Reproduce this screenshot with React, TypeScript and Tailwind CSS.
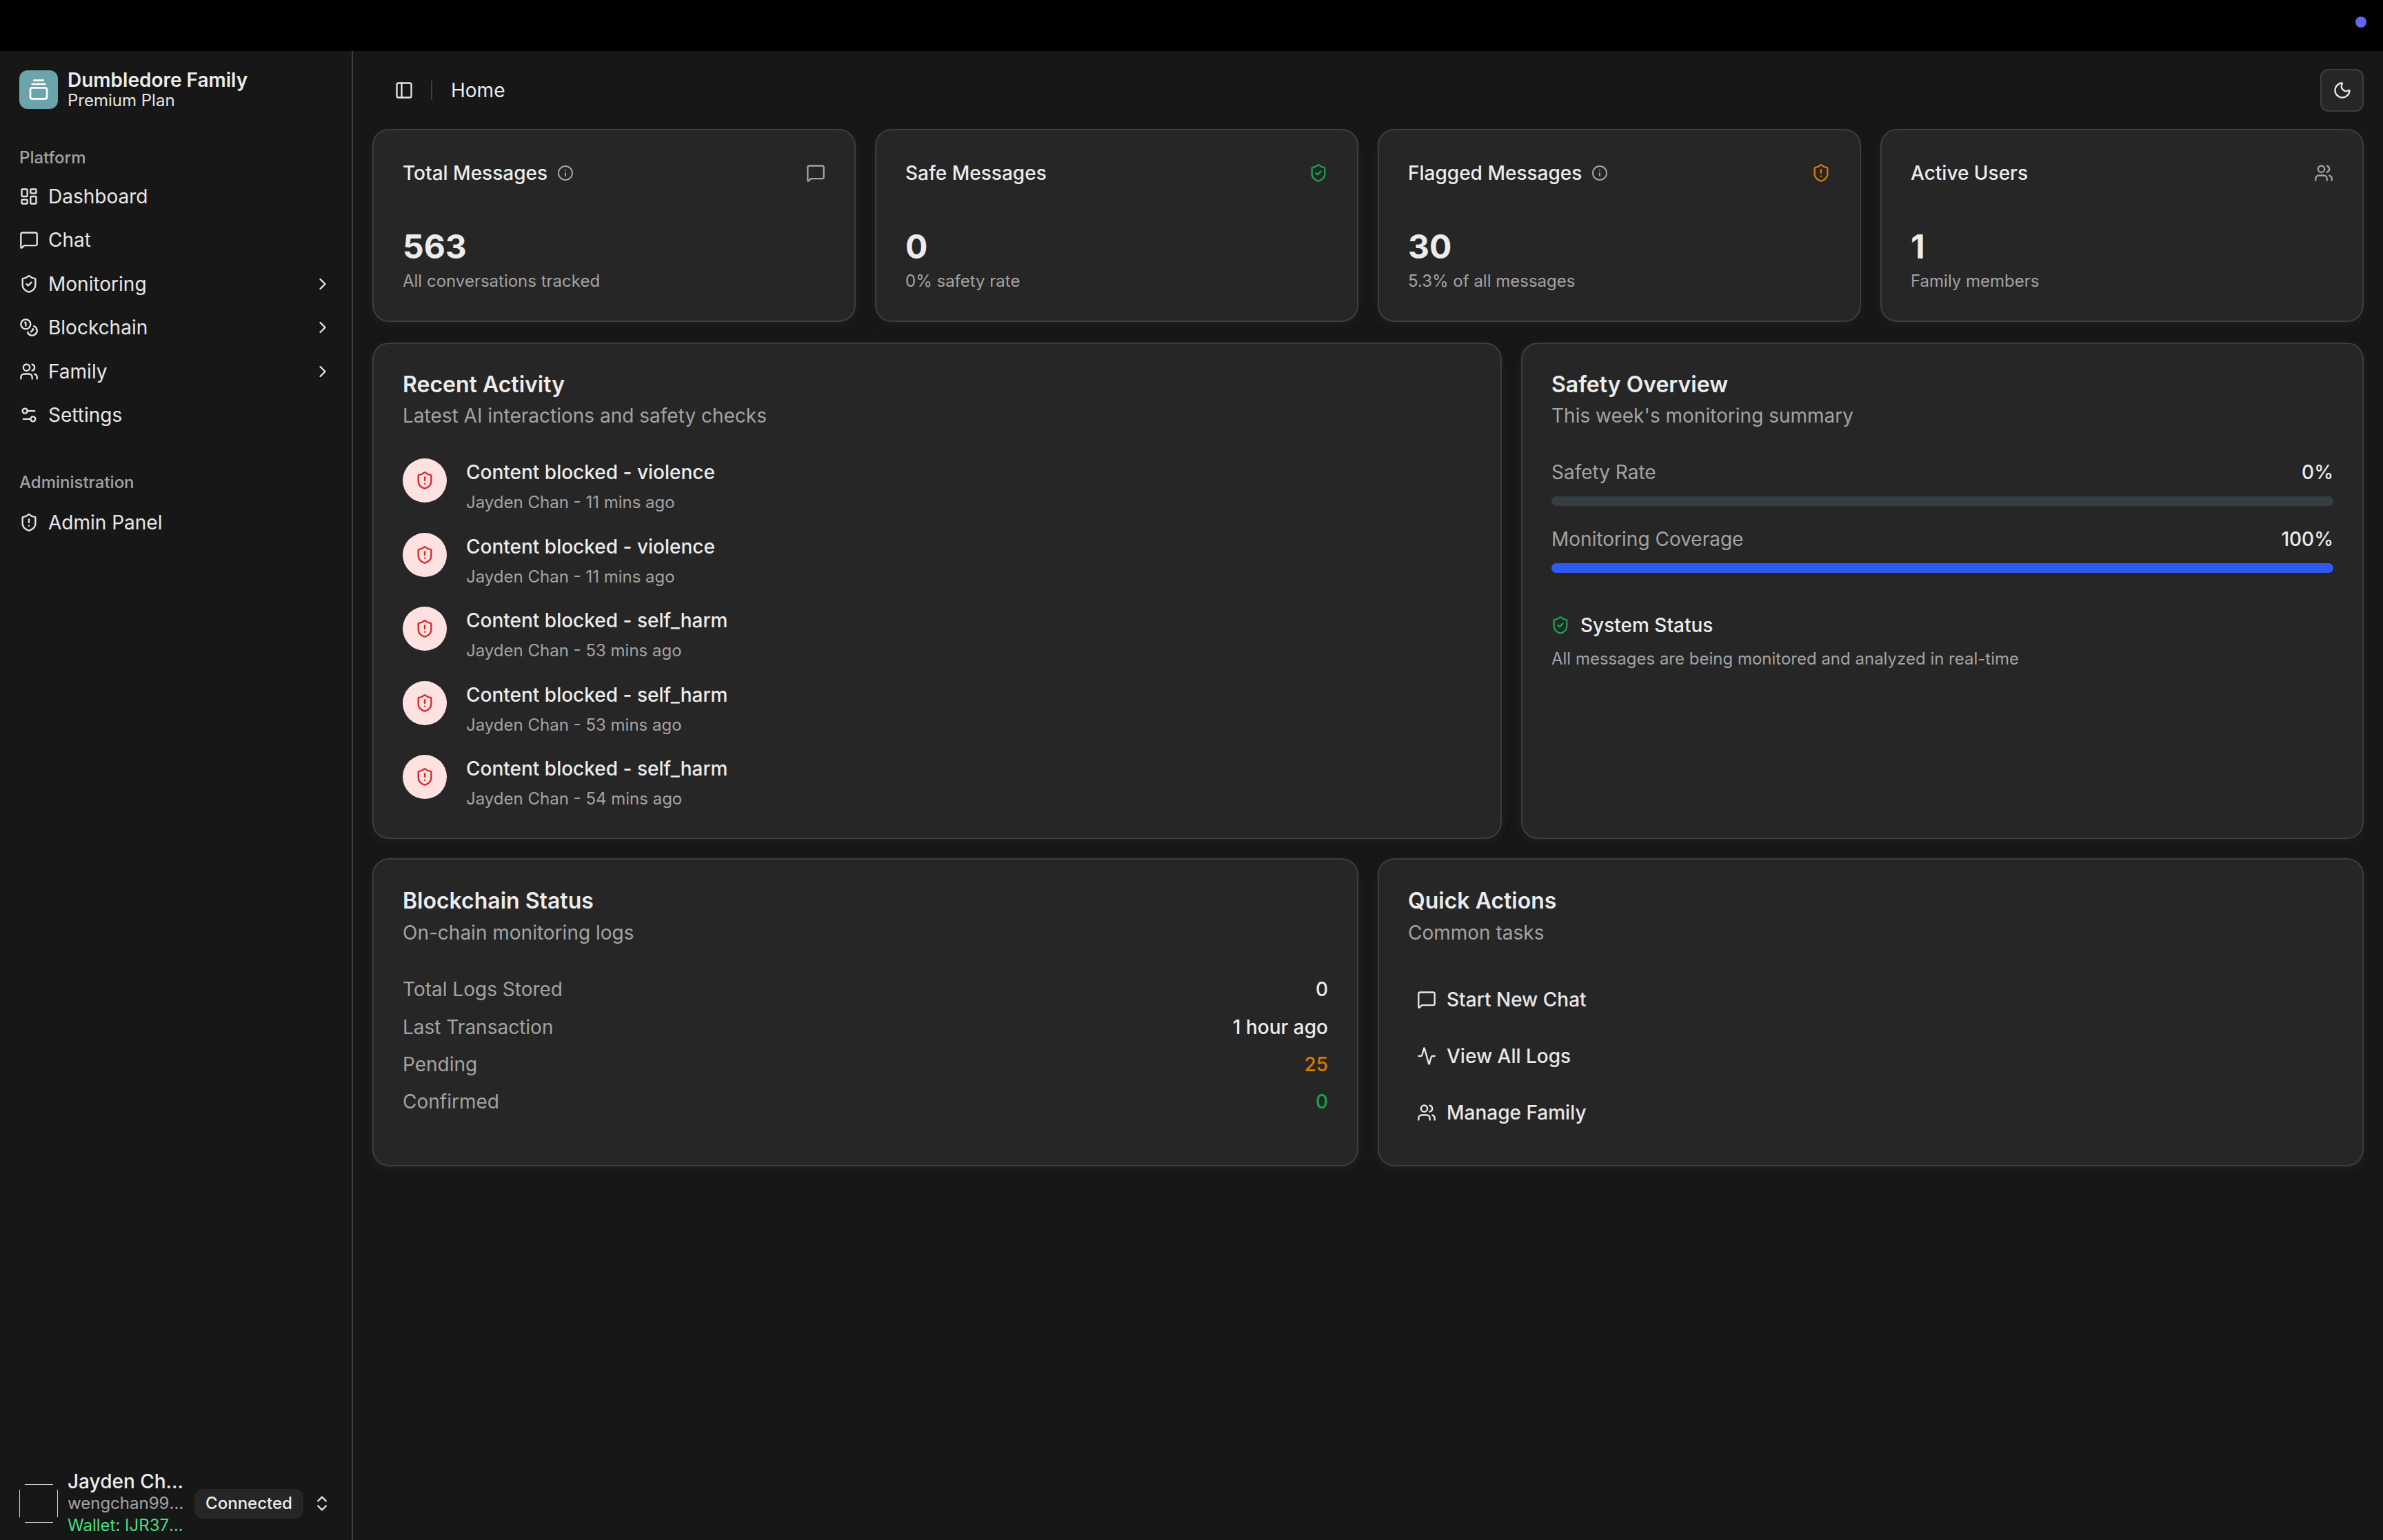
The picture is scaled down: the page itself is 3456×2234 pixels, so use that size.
import React from "react";
import {
  Activity, ChevronRight, ChevronsUpDown, Coins, GalleryVerticalEnd, Info, LayoutDashboard,
  MessageSquare, Moon, PanelLeft, Settings2, ShieldAlert, ShieldCheck, Users,
} from "lucide-react";

const cardClass =
  "rounded-[24px] border-2 border-[#3d3d3d] bg-[#262626] shadow-[0_4px_12px_rgba(28,44,52,0.45)]";

function NavItem({ icon: Icon, label, chevron }: { icon: any; label: string; chevron?: boolean }) {
  return (
    <div className="flex h-[63.5px] items-center">
      <Icon size={28} strokeWidth={2} className="shrink-0 text-[#e5e5e5]" />
      <span className="ml-[14px] flex-1 text-[28px] leading-[40px] text-[#e8e8e8]">{label}</span>
      {chevron && <ChevronRight size={28} className="text-[#e5e5e5]" />}
    </div>
  );
}

function StatCard({ title, value, sub, icon: Icon, iconClass, info }: any) {
  return (
    <div className={`${cardClass} h-[280px] px-[42px] pt-[42px]`}>
      <div className="flex h-[40px] items-center justify-between">
        <div className="flex items-center gap-[14px]">
          <span className="text-[28px] font-medium leading-[40px] text-[#ececec]">{title}</span>
          {info && <Info size={24} className="text-[#a3a3a3]" />}
        </div>
        <Icon size={28} className={iconClass} />
      </div>
      <div className="mt-[55px] text-[48px] font-bold leading-[64px] text-[#ececec]">{value}</div>
      <div className="mt-[2px] text-[24px] leading-[32px] text-[#a3a3a3]">{sub}</div>
    </div>
  );
}

function CardHead({ title, sub, tight }: { title: string; sub: string; tight?: boolean }) {
  return (
    <>
      <div className="text-[32px] font-semibold leading-[40px] text-[#ececec]">{title}</div>
      <div className={`${tight ? "mt-[5px]" : "mt-[6px]"} text-[28px] leading-[40px] text-[#a3a3a3]`}>{sub}</div>
    </>
  );
}

function ActivityRow({ title, sub }: { title: string; sub: string }) {
  return (
    <div className="flex h-[107.5px] items-start">
      <div className="flex h-[64px] w-[64px] shrink-0 items-center justify-center rounded-full bg-[#fee2e2]">
        <ShieldAlert size={28} className="text-[#dc2626]" />
      </div>
      <div className="ml-[28px]">
        <div className="text-[28px] font-medium leading-[40px] text-[#ececec]">{title}</div>
        <div className="mt-[4px] text-[24px] leading-[40px] text-[#a3a3a3]">{sub}</div>
      </div>
    </div>
  );
}

function Progress({ label, value, fill }: { label: string; value: string; fill: string }) {
  return (
    <div>
      <div className="flex h-[40px] items-center justify-between text-[28px]">
        <span className="text-[#a3a3a3]">{label}</span>
        <span className="font-medium text-[#ececec]">{value}</span>
      </div>
      <div className={`mt-[15px] h-[14px] rounded-full ${fill}`} />
    </div>
  );
}

function StatRow({ label, value, cls }: { label: string; value: string; cls: string }) {
  return (
    <div className="flex h-[54.4px] items-center justify-between text-[28px]">
      <span className="text-[#a3a3a3]">{label}</span>
      <span className={`font-medium ${cls}`}>{value}</span>
    </div>
  );
}

function QuickAction({ icon: Icon, label }: { icon: any; label: string }) {
  return (
    <div className="flex h-[82px] items-center pl-[13px]">
      <Icon size={28} className="text-[#e8e8e8]" />
      <span className="ml-[15px] text-[28px] font-medium leading-[40px] text-[#e8e8e8]">{label}</span>
    </div>
  );
}

export default function App() {
  return (
    <div className="relative flex h-screen flex-col bg-black font-['Inter',sans-serif]">
      <div className="relative h-[74px] shrink-0 bg-black">
        <div className="absolute right-[24px] top-[24px] h-[16px] w-[16px] rounded-full bg-[#6366f1]" />
      </div>
      <div className="flex min-h-0 flex-1 bg-[#171717]">
        <aside className="flex w-[512px] shrink-0 flex-col border-r-2 border-[#3d3d3d] bg-[#171717] px-[28px] pt-[28px]">
          <div className="flex h-[56px] items-center">
            <div className="flex h-[56px] w-[56px] items-center justify-center rounded-[12px] bg-[#6ba4aa]">
              <GalleryVerticalEnd size={32} className="text-white" />
            </div>
            <div className="mb-[1px] ml-[14px]">
              <div className="text-[28px] font-semibold leading-[32px] text-[#ececec]">Dumbledore Family</div>
              <div className="text-[24px] leading-[28px] text-[#e5e5e5]">Premium Plan</div>
            </div>
          </div>
          <div className="mt-[55px] text-[24px] font-medium leading-[32px] text-[#a3a3a3]">Platform</div>
          <div className="mt-[8px]">
            <NavItem icon={LayoutDashboard} label="Dashboard" />
            <NavItem icon={MessageSquare} label="Chat" />
            <NavItem icon={ShieldCheck} label="Monitoring" chevron />
            <NavItem icon={Coins} label="Blockchain" chevron />
            <NavItem icon={Users} label="Family" chevron />
            <NavItem icon={Settings2} label="Settings" />
          </div>
          <div className="mt-[50px] text-[24px] font-medium leading-[32px] text-[#a3a3a3]">Administration</div>
          <div className="mt-[10px]">
            <NavItem icon={ShieldAlert} label="Admin Panel" />
          </div>
          <div className="mt-auto flex items-center pb-[5px]">
            <svg width="56" height="56" viewBox="0 0 56 56" className="shrink-0" fill="none" stroke="#cfcfcf" strokeWidth="1">
              <path d="M8 0.5H49M8 55.5H49M0.5 8V48M55.5 8V48" />
            </svg>
            <div className="ml-[14px] w-[172px] min-w-0">
              <div className="truncate text-[28px] font-medium leading-[32px] text-[#ececec]">Jayden Chan</div>
              <div className="truncate text-[24px] leading-[32px] text-[#a3a3a3]">wengchan99@gmail.com</div>
              <div className="truncate text-[24px] leading-[32px] text-[#4ade80]">Wallet: IJR37xkq91</div>
            </div>
            <div className="ml-[12px] flex h-[43px] w-[158px] shrink-0 items-center justify-center rounded-[12px] bg-[#262626] text-[24px] font-medium text-[#ececec]">
              Connected
            </div>
            <ChevronsUpDown size={28} className="ml-[13px] shrink-0 text-[#e5e5e5]" />
          </div>
        </aside>

        <main className="min-w-0 flex-1 px-[28px]">
          <header className="flex h-[113px] items-center justify-between">
            <div className="flex items-center">
              <PanelLeft size={28} className="ml-[32px] text-[#e5e5e5]" />
              <div className="ml-[25px] h-[28px] w-[2px] bg-[#3d3d3d]" />
              <span className="ml-[27px] text-[28px] leading-[40px] text-[#ececec]">Home</span>
            </div>
            <div className="flex h-[62px] w-[63px] items-center justify-center rounded-[12px] border-2 border-[#3d3d3d] bg-[#262626]">
              <Moon size={28} className="text-[#e5e5e5]" />
            </div>
          </header>

          <div className="grid grid-cols-4 gap-[28px]">
            <StatCard title="Total Messages" value="563" sub="All conversations tracked" icon={MessageSquare} iconClass="text-[#a3a3a3]" info />
            <StatCard title="Safe Messages" value="0" sub="0% safety rate" icon={ShieldCheck} iconClass="text-[#16a34a]" />
            <StatCard title="Flagged Messages" value="30" sub="5.3% of all messages" icon={ShieldAlert} iconClass="text-[#d97706]" info />
            <StatCard title="Active Users" value="1" sub="Family members" icon={Users} iconClass="text-[#a3a3a3]" />
          </div>

          <div className="mt-[30px] grid grid-cols-[1638fr_1222fr] gap-[28px]">
            <div className={`${cardClass} h-[720px] px-[42px] pt-[39px]`}>
              <CardHead title="Recent Activity" sub="Latest AI interactions and safety checks" tight />
              <div className="mt-[42px]">
                <ActivityRow title="Content blocked - violence" sub="Jayden Chan - 11 mins ago" />
                <ActivityRow title="Content blocked - violence" sub="Jayden Chan - 11 mins ago" />
                <ActivityRow title="Content blocked - self_harm" sub="Jayden Chan - 53 mins ago" />
                <ActivityRow title="Content blocked - self_harm" sub="Jayden Chan - 53 mins ago" />
                <ActivityRow title="Content blocked - self_harm" sub="Jayden Chan - 54 mins ago" />
              </div>
            </div>
            <div className={`${cardClass} h-[720px] px-[42px] pt-[39px]`}>
              <CardHead title="Safety Overview" sub="This week's monitoring summary" tight />
              <div className="mt-[42px]">
                <Progress label="Safety Rate" value="0%" fill="bg-[#343d40]" />
                <div className="mt-[28px]">
                  <Progress label="Monitoring Coverage" value="100%" fill="bg-[#2d5bf0]" />
                </div>
              </div>
              <div className="mt-[56px] flex h-[40px] items-center">
                <ShieldCheck size={28} className="ml-[-1px] text-[#16a34a]" />
                <span className="ml-[15px] text-[28px] font-medium text-[#ececec]">System Status</span>
              </div>
              <div className="mt-[13px] text-[24px] leading-[32px] text-[#a3a3a3]">
                All messages are being monitored and analyzed in real-time
              </div>
            </div>
          </div>

          <div className="mt-[28px] grid grid-cols-2 gap-[28px]">
            <div className={`${cardClass} h-[447px] px-[42px] pt-[40px]`}>
              <CardHead title="Blockchain Status" sub="On-chain monitoring logs" />
              <div className="mt-[35px]">
                <StatRow label="Total Logs Stored" value="0" cls="text-[#ececec]" />
                <StatRow label="Last Transaction" value="1 hour ago" cls="text-[#ececec]" />
                <StatRow label="Pending" value="25" cls="text-[#d97706]" />
                <StatRow label="Confirmed" value="0" cls="text-[#16a34a]" />
              </div>
            </div>
            <div className={`${cardClass} h-[447px] px-[42px] pt-[40px]`}>
              <CardHead title="Quick Actions" sub="Common tasks" />
              <div className="mt-[36px]">
                <QuickAction icon={MessageSquare} label="Start New Chat" />
                <QuickAction icon={Activity} label="View All Logs" />
                <QuickAction icon={Users} label="Manage Family" />
              </div>
            </div>
          </div>
        </main>
      </div>
    </div>
  );
}
